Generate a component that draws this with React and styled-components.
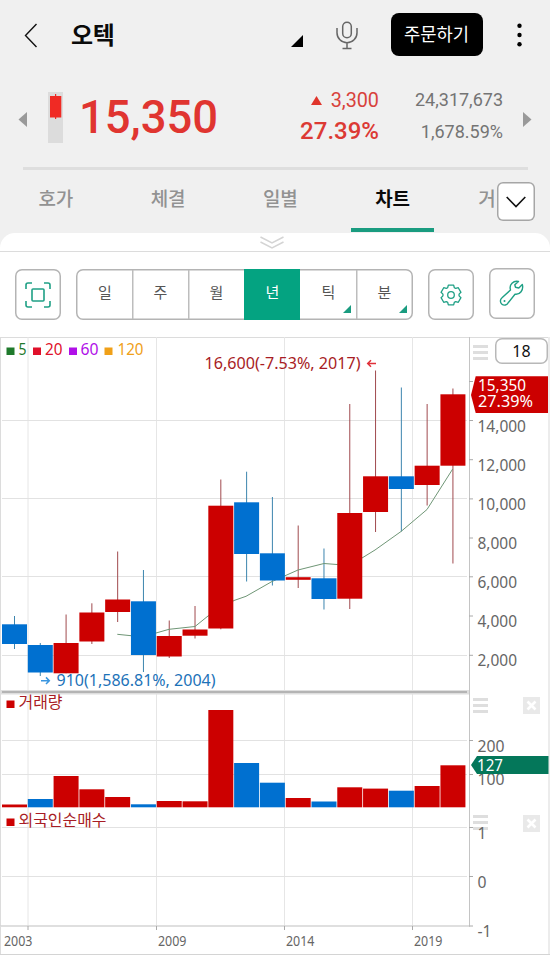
import React from "react";
import styled, { createGlobalStyle } from "styled-components";

const GREEN = "#04a381";
const RED = "#cc0000";
const BLUE = "#0070d0";

const GlobalStyles = createGlobalStyle`
  * {
    box-sizing: border-box;
  }
  body {
    margin: 0;
    background: #fff;
    font-family: Roboto, "Noto Sans CJK KR", sans-serif;
  }
  svg {
    display: block;
  }
`;

const AppContainer = styled.div`
  width: 550px;
  height: 955px;
  overflow: hidden;
  background: #f0f0f0;
`;

const Header = styled.header`
  display: flex;
  align-items: center;
  height: 70px;
  padding: 0 28px 0 24px;
`;

const Title = styled.h1`
  margin: 2px auto 0 33px;
  font-size: 24px;
  line-height: 30px;
  letter-spacing: -0.4px;
  font-weight: 700;
  color: #0a0a0a;
`;

const Corner = styled.svg`
  margin: 12px 33px 0 0;
`;

const OrderButton = styled.button`
  width: 92px;
  height: 43px;
  margin: 0 34.5px 1px 33px;
  padding: 0 0 3px;
  border: 0;
  border-radius: 8px;
  background: #000;
  color: #fff;
  font: 400 17.7px/24px "Noto Sans CJK KR", sans-serif;
`;

const Quote = styled.section`
  display: flex;
  height: 97px;
  padding: 0 17px 0 18px;
`;

const ArrowIcon = styled.svg`
  margin-top: 42px;
`;

const MiniCandle = styled.svg`
  margin: 22px 0 0 21px;
`;

const Price = styled.div`
  margin: 21px 0 0 16px;
  width: 140px;
  font-size: 45.4px;
  line-height: 53px;
  font-weight: 500;
  color: #e03530;
`;

const Figures = styled.div`
  display: flex;
  flex-direction: column;
  align-items: flex-end;
  width: ${(p) => p.$width}px;
  padding-top: ${(p) => p.$top}px;
  margin-right: ${(p) => p.$right || 0}px;
`;

const Figure = styled.div`
  display: flex;
  align-items: center;
  gap: 9px;
  height: ${(p) => p.$height || 31}px;
  font-size: ${(p) => p.$size}px;
  line-height: 31px;
  font-weight: ${(p) => p.$weight || 400};
  color: ${(p) => p.$color};
`;

const Divider = styled.div`
  height: 3px;
  margin: 0 22px 0 23px;
  background: #dedede;
`;

const Tabs = styled.nav`
  position: relative;
  display: flex;
  height: 63px;
`;

const Tab = styled.div`
  display: flex;
  justify-content: center;
  flex: 0 0 112.3px;
  padding: 14px 1px 0 0;
  font-size: 19px;
  line-height: 32px;
  letter-spacing: -0.3px;
  font-weight: ${(p) => (p.$active ? 700 : 500)};
  color: ${(p) => (p.$active ? "#0a0a0a" : "#929292")};
`;

const TabLine = styled.span`
  position: absolute;
  left: 351px;
  top: 58px;
  width: 83px;
  height: 4px;
  background: #1a9c80;
`;

const CutTab = styled(Tab)`
  flex: 0 0 16px;
  justify-content: flex-start;
  margin-left: 29px;
  overflow: hidden;
`;

const MoreButton = styled.button`
  display: flex;
  align-items: center;
  justify-content: center;
  width: 38px;
  height: 39px;
  margin: 12px 0 0 3px;
  padding: 0;
  box-shadow: inset 0 0 0 1.5px #a6a6a6;
  border: 0;
  border-radius: 6px;
  background: #fff;
`;

const Sheet = styled.main`
  background: #fff;
  border-radius: 15px 15px 0 0;
`;

const Grip = styled.div`
  display: flex;
  justify-content: center;
  height: 19px;
  padding: 3px 7px 0 0;
  border-bottom: 1px solid #dcdcdc;
`;

const Toolbar = styled.div`
  display: flex;
  height: 85px;
  padding: 17px 15px 0;
`;

const ToolButton = styled.button`
  display: flex;
  align-items: center;
  justify-content: center;
  width: 46px;
  height: 51px;
  margin: ${(p) => (p.$raised ? "-1px 0 0 15px" : "0")};
  padding: 0;
  box-shadow: inset 0 0 0 1.5px #b4b4b4;
  border: 0;
  border-radius: 7px;
  background: #fff;
`;

const Periods = styled.div`
  display: grid;
  grid-template-columns: 55px repeat(4, 56px) 1fr;
  width: 337px;
  height: 51px;
  margin: 0 15px;
  padding: 1px;
  box-shadow: inset 0 0 0 1.5px #b4b4b4;
  border-radius: 7px;
`;

const Period = styled.div`
  position: relative;
  margin: ${(p) => (p.$active ? "-1px 0" : "0")};
  box-shadow: ${(p) => (p.$first || p.$active ? "none" : "inset 1.5px 0 0 #bdbdbd")};
  background: ${(p) => (p.$active ? GREEN : "transparent")};
  color: ${(p) => (p.$active ? "#fff" : "#555")};
  text-align: center;
  font: 400 15px/24px "Noto Sans CJK KR", sans-serif;
  padding: ${(p) => (p.$active ? 11 : 10)}px 0 0 1px;
`;

const PeriodMark = styled.svg`
  position: absolute;
  right: 5px;
  bottom: 6px;
`;

const Chart = styled.div`
  border-right: 2px solid #ececec;
`;

const Pane = styled.div`
  position: relative;
  height: ${(p) => p.$height}px;
`;

const Plot = styled.svg`
  position: relative;
  z-index: 1;
  font-family: "Noto Sans", "Noto Sans CJK KR", sans-serif;
  font-size: 17px;
`;

const Handle = styled.span`
  position: absolute;
  left: 473px;
  top: ${(p) => p.$top}px;
  width: 15px;
  height: 15px;
  border-top: 3px solid #dedede;
  border-bottom: 3px solid #dedede;
  &::after {
    content: "";
    display: block;
    height: 3px;
    margin-top: 3px;
    background: #dedede;
  }
`;

const CountBox = styled.div`
  position: absolute;
  z-index: 2;
  left: 495px;
  top: 1px;
  width: 53px;
  height: 26px;
  box-shadow: inset 0 0 0 1.5px #b8b8b8;
  border-radius: 7px;
  background: #fff;
  text-align: center;
  font: 400 16px/27px "Noto Sans", sans-serif;
  color: #111;
`;

const CloseButton = styled.button`
  position: absolute;
  left: 523px;
  top: ${(p) => p.$top}px;
  width: 17px;
  height: 17px;
  padding: 0;
  border: 0;
  background: #e9e9e9;
`;

// color, high, open/close top, open/close bottom, low
const candles = [
  ["b", 616, 624.3, 644, 649],
  ["b", 643, 645, 672.5, 676],
  ["r", 614.5, 643, 673.3, 673.3],
  ["r", 603.3, 612.5, 641.5, 644],
  ["r", 551.5, 599.5, 612, 622],
  ["b", 570, 601.3, 655, 672],
  ["r", 620.5, 636, 656.5, 658],
  ["r", 606, 629.5, 635.7, 638.5],
  ["r", 479.5, 505.7, 628.5, 629.3],
  ["b", 471.7, 502.3, 554, 581.5],
  ["b", 497, 553.3, 580.5, 585.5],
  ["r", 525.5, 577.2, 579.8, 588],
  ["b", 548.5, 578.3, 599, 609.5],
  ["r", 404, 513, 598.7, 609],
  ["r", 370.5, 476.3, 512, 532],
  ["b", 387.5, 476.3, 489, 531.5],
  ["r", 404, 465.7, 485, 505.5],
  ["r", 388.5, 394.3, 465.7, 563.5],
];

const volumes = [
  ["r", 804.5],
  ["b", 799],
  ["r", 776],
  ["r", 789.3],
  ["r", 797],
  ["b", 804.3],
  ["r", 801],
  ["r", 801.3],
  ["r", 710],
  ["b", 763],
  ["b", 782.7],
  ["r", 798],
  ["b", 801.5],
  ["r", 787.3],
  ["r", 788.6],
  ["b", 790.7],
  ["r", 786],
  ["r", 765.3],
];

const barX = (i) => 2 + i * 25.79;
const gridX = [28, 156.5, 284.5, 412.5];
const years = ["2003", "2009", "2014", "2019"];

const legend = [
  ["5", 6.5, 18.5, 8, "#1f7a2c"],
  ["20", 33, 45, 17.5, "#e0102a"],
  ["60", 69, 80.5, 18, "#b010e8"],
  ["120", 104.5, 117.5, 26, "#f0a018"],
];

const priceLabels = [
  ["14,000", 420.5],
  ["12,000", 459.7],
  ["10,000", 498.9],
  ["8,000", 538],
  ["6,000", 576.8],
  ["4,000", 616],
  ["2,000", 655.3],
];

function gearPoints() {
  const pts = [];
  for (let i = 0; i < 6; i++) {
    const a = i * 60 - 90;
    [[-24, 8.1], [-15, 10.3], [15, 10.3], [24, 8.1]].forEach(([d, r]) => {
      const t = ((a + d) * Math.PI) / 180;
      pts.push(`${(12 + r * Math.cos(t)).toFixed(2)},${(12 + r * Math.sin(t)).toFixed(2)}`);
    });
  }
  return pts.join(" ");
}

function Columns({ top, bottom }) {
  return gridX.map((x) => (
    <line key={x} x1={x} x2={x} y1={top} y2={bottom} stroke="#e6e6e6" />
  ));
}

function Row({ y }) {
  return <line x1="2" x2="467" y1={y} y2={y} stroke="#e2e2e2" />;
}

function Tick({ y }) {
  return <line x1="469" x2="473" y1={y} y2={y} stroke="#aaa" />;
}

function Frame({ top, bottom }) {
  return (
    <>
      <line x1="0.5" x2="0.5" y1={top} y2={bottom} stroke="#dcdcdc" />
      <line x1="469.5" x2="469.5" y1={top} y2={bottom} stroke="#c4c4c4" />
    </>
  );
}

function Label({ x, y, w, children, ...rest }) {
  return (
    <text x={x} y={y} textLength={w} lengthAdjust="spacingAndGlyphs" fill="#666" {...rest}>
      {children}
    </text>
  );
}

function Close({ top }) {
  return (
    <CloseButton $top={top}>
      <svg width="17" height="17" viewBox="0 0 17 17">
        <path d="M4.5 4.5l8 8M12.5 4.5l-8 8" stroke="#fff" strokeWidth="2.6" />
      </svg>
    </CloseButton>
  );
}

function PricePane() {
  return (
    <Pane $height={353}>
      <Plot width="550" height="353" viewBox="0 337 550 353">
        <line x1="0" x2="548" y1="337.5" y2="337.5" stroke="#dcdcdc" />
        <Columns top={337} bottom={690} />
        {[420.5, 498.5, 576.5, 655.5].map((y) => (
          <Row key={y} y={y} />
        ))}
        <Frame top={337} bottom={690} />
        <Tick y={381.5} />
        {candles.map(([c, high, , , low], i) => (
          <line
            key={i}
            x1={barX(i) + 12.5}
            x2={barX(i) + 12.5}
            y1={high}
            y2={low}
            stroke={c === "r" ? "#a04a4e" : "#3c85ae"}
          />
        ))}
        <polyline
          points="117.3,634.3 131,635.7 156,633 169,629.3 195,626.5 208,616 234,600.5 246,596.3 272,581.5 298,570 324,563.5 337,564.5 362,558 375,550 401,531.5 427,509.5 452.7,469"
          fill="none"
          stroke="#6f9676"
        />
        {candles.map(([c, , top, bottom], i) => (
          <rect
            key={i}
            x={barX(i)}
            y={top}
            width="25"
            height={bottom - top}
            fill={c === "r" ? RED : BLUE}
          />
        ))}
        {legend.map(([name, sx, tx, w, color]) => (
          <g key={name}>
            <rect x={sx} y="347.5" width="8" height="7.5" fill={color} />
            <Label x={tx} y="354.5" w={w} fill={color}>
              {name}
            </Label>
          </g>
        ))}
        <Label x="204.5" y="369.3" w="156" fill="#a81c24">
          16,600(-7.53%, 2017)
        </Label>
        <path d="M376 363.5h-8M371 360.2l-3.3 3.3 3.3 3.3" fill="none" stroke="#e0303a" strokeWidth="1.5" />
        <Label x="56.5" y="686.3" w="159" fill="#1c72b8">
          910(1,586.81%, 2004)
        </Label>
        <path d="M41 680.7h8M46 677.4l3.3 3.3-3.3 3.3" fill="none" stroke="#3a96e0" strokeWidth="1.5" />
        {priceLabels.map(([t, y]) => (
          <g key={t}>
            <Tick y={y} />
            <Label x="477.5" y={y + 11} w={t.length > 5 ? 48.5 : 39.5}>
              {t}
            </Label>
          </g>
        ))}
        <path d="M471 395l4.7-18.7H548V413h-72.3z" fill={RED} />
        <Label x="478" y="390.7" w="48" fill="#fff">
          15,350
        </Label>
        <Label x="478" y="406.5" w="55" fill="#fff">
          27.39%
        </Label>
      </Plot>
      <Handle $top={8} />
      <CountBox>18</CountBox>
    </Pane>
  );
}

function VolumePane() {
  return (
    <Pane $height={118}>
      <Plot width="550" height="118" viewBox="0 690 550 118">
        <Columns top={694} bottom={808} />
        <Row y={740.5} />
        <Row y={774.5} />
        <Frame top={690} bottom={808} />
        <rect x="0" y="689.5" width="469" height="5" fill="#dedede" />
        <rect x="2" y="691" width="465" height="2" fill="#b4b4b4" />
        {volumes.map(([c, top], i) => (
          <rect
            key={i}
            x={barX(i)}
            y={top}
            width="25"
            height={807.3 - top}
            fill={c === "r" ? RED : BLUE}
          />
        ))}
        <rect x="6.5" y="700.5" width="8" height="7.5" fill={RED} />
        <Label x="18.5" y="708" w="44" fill="#a81c24" fontSize="16">
          거래량
        </Label>
        <Tick y={740.5} />
        <Tick y={774.5} />
        <Label x="477.5" y="751.5" w="27">
          200
        </Label>
        <Label x="477.5" y="785" w="27">
          100
        </Label>
        <path d="M471 765l6-9h71.5v18H477z" fill="#04775a" />
        <Label x="477" y="771" w="26" fill="#fff">
          127
        </Label>
      </Plot>
      <Handle $top={8} />
      <Close top={7} />
    </Pane>
  );
}

function ForeignPane() {
  return (
    <Pane $height={147}>
      <Handle $top={7} />
      <Close top={7} />
      <Plot width="550" height="147" viewBox="0 808 550 147">
        <Columns top={808} bottom={926} />
        <Row y={827.5} />
        <Row y={876.5} />
        <Frame top={808} bottom={926} />
        <line x1="0" x2="470" y1="926" y2="926" stroke="#d4d4d4" strokeWidth="1.5" />
        <rect x="6.5" y="818.5" width="8" height="7.5" fill={RED} />
        <Label x="18.5" y="826" w="88" fill="#a81c24" fontSize="16">
          외국인순매수
        </Label>
        {["1", "0", "-1"].map((t, i) => (
          <g key={t}>
            <Tick y={[827.5, 876.5, 926][i]} />
            <Label x="477.5" y={[838.5, 887.5, 936.7][i]} w={t.length > 1 ? 14 : 9}>
              {t}
            </Label>
          </g>
        ))}
        {years.map((t, i) => (
          <g key={t}>
            <line x1={gridX[i]} x2={gridX[i]} y1="926" y2="930" stroke="#aaa" />
            <Label x={i ? gridX[i] + 1.5 : 4} y="946" w="28.5" fontSize="13.8">
              {t}
            </Label>
          </g>
        ))}
        <line x1="0.5" x2="0.5" y1="926" y2="955" stroke="#dcdcdc" />
        <line x1="0" x2="550" y1="954.5" y2="954.5" stroke="#d4d4d4" />
      </Plot>
    </Pane>
  );
}

function App() {
  return (
    <>
      <GlobalStyles />
      <AppContainer>
        <Header>
          <svg width="14" height="25" viewBox="0 0 14 25">
            <path d="M12.5 1L1.5 12.5l11 11.5" fill="none" stroke="#111" strokeWidth="1.4" />
          </svg>
          <Title>오텍</Title>
          <Corner width="12" height="12" viewBox="0 0 12 12">
            <path d="M0 12H12V0z" fill="#000" />
          </Corner>
          <svg width="22" height="29" viewBox="0 0 22 29" fill="none" stroke="#666" strokeWidth="1.5">
            <rect x="6.7" y="1.2" width="8.6" height="15.6" rx="4.3" />
            <path d="M1 7v4.7a10 10 0 0 0 20 0V7M11 21.7v5.8M6.5 27.5h9" />
          </svg>
          <OrderButton>주문하기</OrderButton>
          <svg width="5" height="24" viewBox="0 0 5 24">
            <circle cx="2.5" cy="2.7" r="2.2" />
            <circle cx="2.5" cy="12" r="2.2" />
            <circle cx="2.5" cy="21.3" r="2.2" />
          </svg>
        </Header>
        <Quote>
          <ArrowIcon width="9" height="15" viewBox="0 0 9 15">
            <path d="M9 0v15L.5 7.5z" fill="#999" />
          </ArrowIcon>
          <MiniCandle width="15" height="51" viewBox="0 0 15 51">
            <rect width="15" height="51" fill="#dcdcdc" />
            <path d="M2 4h11.300v21.500H2zM7 2h1.200v25H7z" fill="#f02a24" />
          </MiniCandle>
          <Price>15,350</Price>
          <Figures $width={160} $top={15}>
            <Figure $size={19.8} $color="#d8423c">
              <svg width="11" height="9" viewBox="0 0 11 9">
                <path d="M0 9h11L5.5 0z" fill="#e0352c" />
              </svg>
              3,300
            </Figure>
            <Figure $size={24} $weight={500} $color="#dc3a34">
              27.39%
            </Figure>
          </Figures>
          <Figures $width={124} $top={13} $right={20}>
            <Figure $size={18} $height={32} $color="#747474">24,317,673</Figure>
            <Figure $size={18} $height={32} $color="#747474">1,678.59%</Figure>
          </Figures>
          <ArrowIcon width="9" height="15" viewBox="0 0 9 15">
            <path d="M0 0v15l8.500-7.500z" fill="#999" />
          </ArrowIcon>
        </Quote>
        <Divider />
        <Tabs>
          <Tab>호가</Tab>
          <Tab>체결</Tab>
          <Tab>일별</Tab>
          <Tab $active>차트</Tab>
          <CutTab>거</CutTab>
          <MoreButton>
            <svg width="20" height="12" viewBox="0 0 20 12">
              <path d="M.7 1L10 10.500 19.300 1" fill="none" stroke="#111" strokeWidth="1.6" />
            </svg>
          </MoreButton>
          <TabLine />
        </Tabs>
        <Sheet>
          <Grip>
            <svg width="24" height="14" viewBox="0 0 24 14">
              <path d="M.5 1L12 7 23.500 1M.5 6L12 12 23.500 6" fill="none" stroke="#d4d4d4" strokeWidth="1.5" />
            </svg>
          </Grip>
          <Toolbar>
            <ToolButton>
              <svg width="26" height="26" viewBox="0 0 26 26" fill="none" stroke="#1fa085" strokeWidth="1.6">
                <rect x="7" y="7" width="12" height="12" rx="1" />
                <path d="M1 7V3a2 2 0 0 1 2-2h4M19 1h4a2 2 0 0 1 2 2v4M25 19v4a2 2 0 0 1-2 2h-4M7 25H3a2 2 0 0 1-2-2v-4" />
              </svg>
            </ToolButton>
            <Periods>
              <Period $first>일</Period>
              <Period>주</Period>
              <Period>월</Period>
              <Period $active>년</Period>
              {["틱", "분"].map((t) => (
                <Period key={t} $first={t === "틱"}>
                  {t}
                  <PeriodMark width="8" height="8" viewBox="0 0 8 8">
                    <path d="M0 8h8V0z" fill="#1a9c80" />
                  </PeriodMark>
                </Period>
              ))}
            </Periods>
            <ToolButton>
              <svg width="24" height="24" viewBox="0 0 24 24" fill="none" stroke="#1fa085" strokeWidth="1.3" strokeLinejoin="round">
                <polygon points={gearPoints()} />
                <circle cx="12" cy="12" r="3.3" />
              </svg>
            </ToolButton>
            <ToolButton $raised>
              <svg width="26" height="28" viewBox="0 0 26 28" fill="none" stroke="#1fa085" strokeWidth="1.4" strokeLinejoin="round">
                <path d="M19.500 1.500C14.500.2 9.800 4.500 11.500 10L3 17.800a4.100 4.100 0 1 0 6.200 5L16 14.200c4.800.8 8.900-4.200 7.300-9.700L19.800 8l-3.300-.7-.7-2.500z" />
                <circle cx="5.5" cy="21" r="1" fill="#1fa085" stroke="none" />
              </svg>
            </ToolButton>
          </Toolbar>
          <Chart>
            <PricePane />
            <VolumePane />
            <ForeignPane />
          </Chart>
        </Sheet>
      </AppContainer>
    </>
  );
}

export default App;
